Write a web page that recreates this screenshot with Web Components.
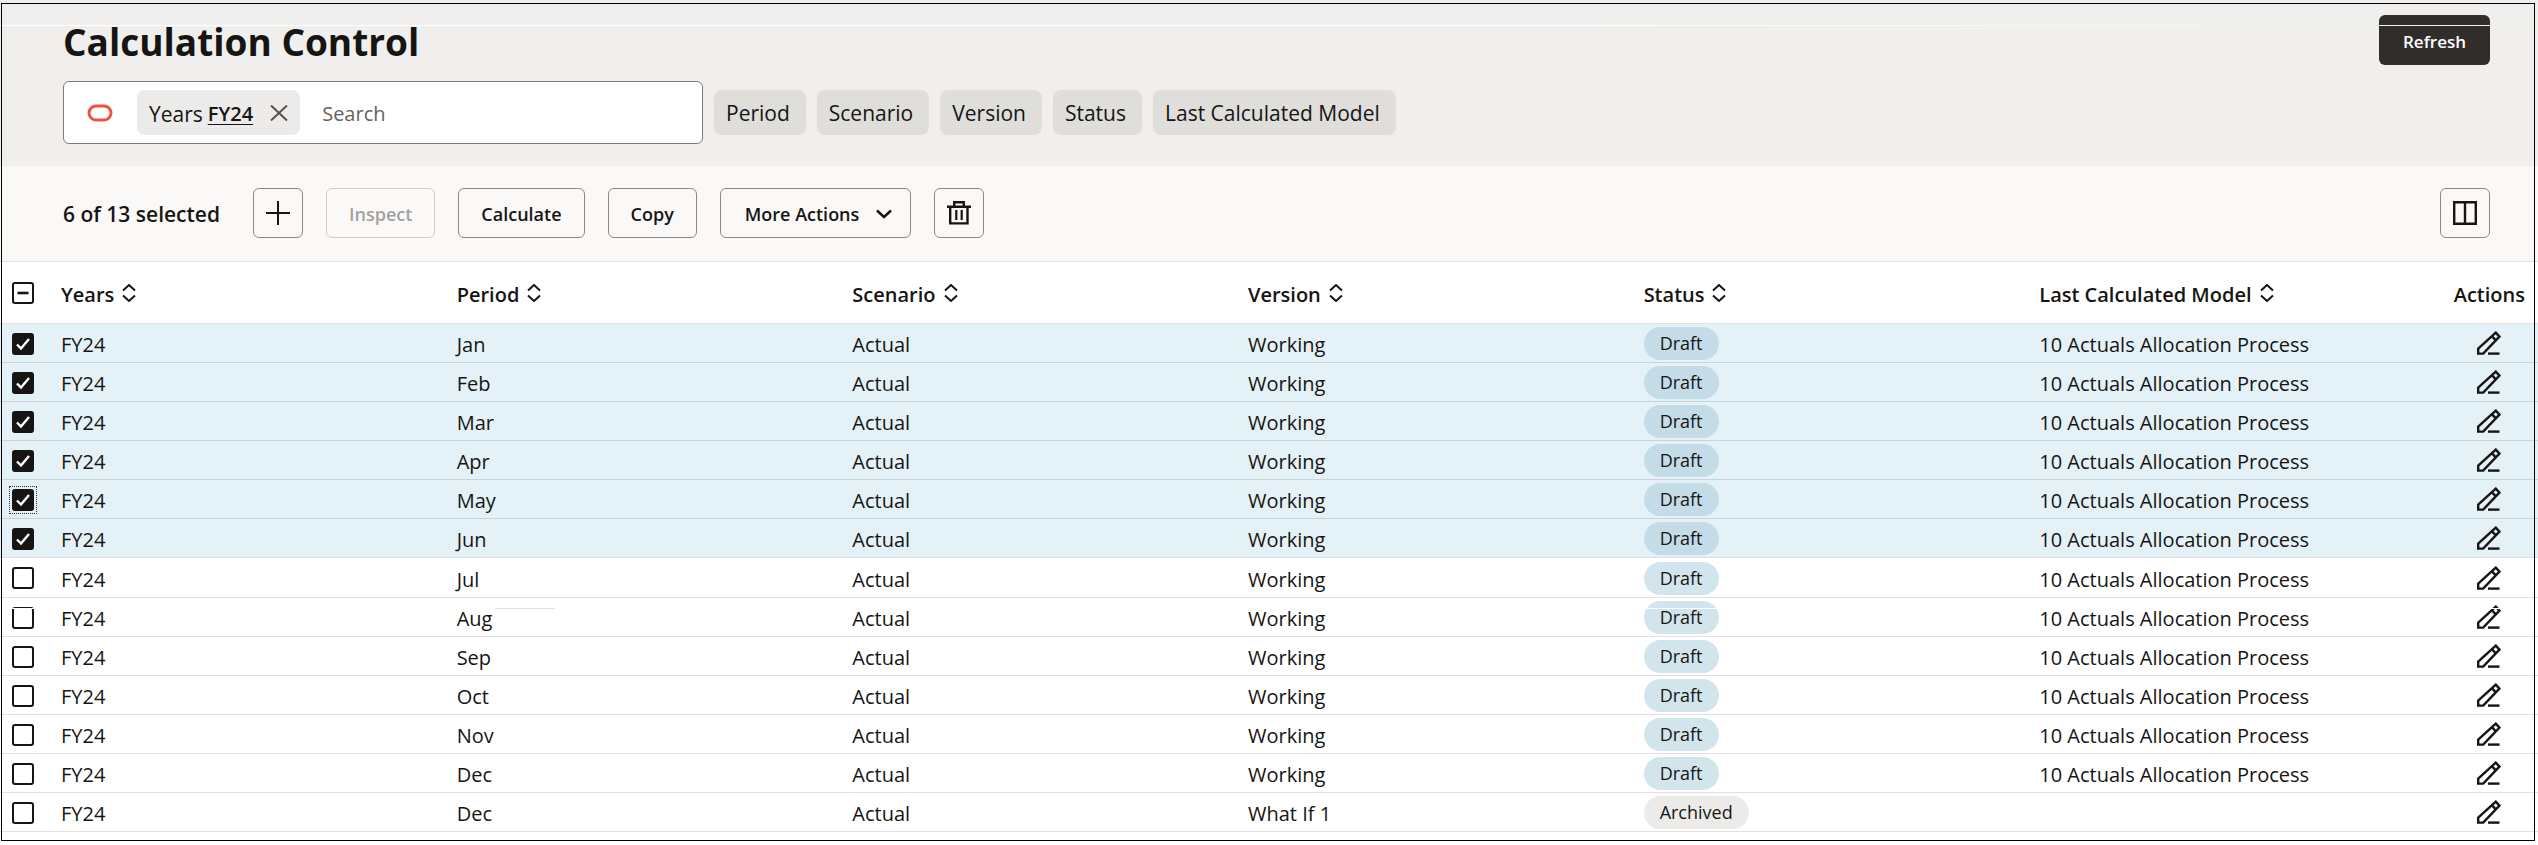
<!DOCTYPE html>
<html lang="en">
<head>
<meta charset="utf-8">
<title>Calculation Control</title>
<style>
  body {
    margin: 0;
    background: #fff;
    color: #161513;
    font-family: "Open Sans", "Noto Sans", sans-serif;
    font-size: 20px;
  }
</style>
</head>
<body>
<calc-page>
  <calc-header heading="Calculation Control">
    <calc-button slot="action" variant="primary">Refresh</calc-button>
    <search-box slot="filters" field="Years" value="FY24"></search-box>
    <filter-chip slot="filters">Period</filter-chip>
    <filter-chip slot="filters">Scenario</filter-chip>
    <filter-chip slot="filters">Version</filter-chip>
    <filter-chip slot="filters">Status</filter-chip>
    <filter-chip slot="filters">Last Calculated Model</filter-chip>
  </calc-header>
  <calc-toolbar>
    <span slot="count">6 of 13 selected</span>
    <calc-button icon="plus" label="Create"></calc-button>
    <calc-button disabled>Inspect</calc-button>
    <calc-button>Calculate</calc-button>
    <calc-button>Copy</calc-button>
    <calc-button icon="chevron">More Actions</calc-button>
    <calc-button icon="trash" label="Delete"></calc-button>
    <calc-button slot="end" icon="columns" label="Manage columns"></calc-button>
  </calc-toolbar>
  <calc-table></calc-table>
</calc-page>

<script>
const icons = {
  plus: `<svg width="24" height="24" viewBox="0 0 24 24"><path d="M12 0v24M0 12h24" stroke-width="2"/></svg>`,
  chevron: `<svg width="16" height="10" viewBox="0 0 16 10"><path d="M1 1.5l7 6.5 7-6.5" stroke-width="2.4"/></svg>`,
  trash: `<svg width="24" height="24" viewBox="0 0 24 24"><path d="M7.2 5.5V1.2h9.6v4.3M0 5.8h24M3.2 5.8v16.6h17.3V5.8" stroke-width="2.4"/><path d="M9.3 9v10M14.7 9v10" stroke-width="2.2"/></svg>`,
  columns: `<svg width="24" height="24" viewBox="0 0 24 24"><path d="M1.2 1.2h21.6v21.6H1.2zM12 1v22" stroke-width="2.4"/></svg>`,
  close: `<svg width="18" height="16" viewBox="0 0 18 16"><path d="M1 .5l16 15M17 .5l-16 15" stroke-width="2"/></svg>`,
  sort: `<svg width="14" height="18" viewBox="0 0 14 18"><path d="M1 6.5l6-5.5 6 5.5M1 11.5l6 5.5 6-5.5" stroke-width="2"/></svg>`,
  pencil: `<svg width="24" height="24" viewBox="0 0 24 24"><path d="M1.2 17.6L18.8 1.6l3.6 4L6.2 22.6h-5zM14.8 5.2l3.8 4" stroke-width="2.4"/><path d="M11 22.6h11.5" stroke-width="2.4"/></svg>`,
  check: `<svg width="22" height="22" viewBox="0 0 22 22"><path d="M5 11.5l4 4 8-9.5" stroke="#fff" stroke-width="2.4"/></svg>`,
  dash: `<svg width="22" height="22" viewBox="0 0 22 22"><path d="M5.5 11h11" stroke-width="2.6"/></svg>`
};

const base = `
  * { box-sizing: border-box; }
  svg { display: block; fill: none; stroke: currentColor; }
  button, input { font: inherit; color: inherit; }
`;

class CalcPage extends HTMLElement {
  constructor() {
    super();
    this.attachShadow({ mode: "open" }).innerHTML = `
      <style>
        ${base}
        :host {
          display: block;
          position: relative;
          padding-bottom: 13px;
        }
        .frame {
          position: absolute;
          inset: 3px 3px 4px 1px;
          border: 1px solid #000;
          pointer-events: none;
        }
      </style>
      <slot></slot>
      <div class="frame"></div>
    `;
  }
}

class CalcHeader extends HTMLElement {
  constructor() {
    super();
    this.attachShadow({ mode: "open" });
  }

  connectedCallback() {
    this.shadowRoot.innerHTML = `
      <style>
        ${base}
        :host {
          display: block;
          position: relative;
          padding: 15px 48px 22px 63px;
          background: #f0efed;
        }
        .top {
          display: flex;
          justify-content: space-between;
          align-items: flex-start;
          min-height: 66px;
        }
        h1 {
          margin: 0;
          font-size: 37px;
          font-weight: 700;
          line-height: 54px;
        }
        .filters {
          display: flex;
          align-items: center;
          gap: 11px;
        }
        .line {
          position: absolute;
          top: 25px;
          left: 0;
          right: 0;
          height: 1px;
          background: linear-gradient(90deg, #fff 60%, #e9f8e9 90%);
        }
      </style>
      <div class="top">
        <h1>${this.getAttribute("heading")}</h1>
        <slot name="action"></slot>
      </div>
      <div class="filters"><slot name="filters"></slot></div>
      <div class="line"></div>
    `;
  }
}

class SearchBox extends HTMLElement {
  constructor() {
    super();
    this.attachShadow({ mode: "open" });
  }

  connectedCallback() {
    this.shadowRoot.innerHTML = `
      <style>
        ${base}
        :host {
          box-sizing: border-box;
          display: flex;
          align-items: center;
          flex: 0 1 640px;
          height: 63px;
          padding: 0 16px 0 23px;
          border: 1px solid #7d7c7a;
          border-radius: 6px;
          background: #fff;
          font-size: 21px;
        }
        .logo { color: #ee5340; }
        .token {
          display: flex;
          align-items: center;
          height: 45px;
          margin: 0 22px 0 24px;
          padding: 0 12px;
          border-radius: 8px;
          background: #ecebea;
          white-space: nowrap;
        }
        b {
          margin-left: 5px;
          font-size: 20px;
          font-weight: 600;
          text-decoration: underline;
          text-decoration-thickness: 1px;
          text-underline-offset: 3px;
        }
        button {
          margin-left: 17px;
          padding: 0;
          border: 0;
          background: none;
          color: #55524e;
        }
        input {
          flex: 1;
          min-width: 0;
          padding: 2px 0 0;
          border: 0;
          outline: 0;
          background: none;
          font-size: 20px;
        }
        input::placeholder { color: #65625e; opacity: 1; }
        .token span, b { padding-top: 2px; }
      </style>
      <svg class="logo" width="26" height="18" viewBox="0 0 26 18"><rect x="2" y="2" width="22" height="14" rx="7" stroke-width="3"/></svg>
      <span class="token">
        <span>${this.getAttribute("field")}</span><b>${this.getAttribute("value")}</b>
        <button type="button" aria-label="Remove filter">${icons.close}</button>
      </span>
      <input type="text" placeholder="Search" aria-label="Search">
    `;
  }
}

class FilterChip extends HTMLElement {
  constructor() {
    super();
    this.attachShadow({ mode: "open" }).innerHTML = `
      <style>
        ${base}
        :host { display: block; }
        button {
          display: block;
          height: 45px;
          padding: 0 16px 0 12px;
          border: 0;
          border-radius: 8px;
          background: #dfdedb;
          font-size: 21px;
          white-space: nowrap;
        }
      </style>
      <button type="button"><slot></slot></button>
    `;
  }
}

class CalcToolbar extends HTMLElement {
  constructor() {
    super();
    this.attachShadow({ mode: "open" }).innerHTML = `
      <style>
        ${base}
        :host {
          display: flex;
          align-items: center;
          gap: 23px;
          padding: 22px 48px 23px 63px;
          border-bottom: 1px solid #e3e2e0;
          background: #fbf9f8;
        }
        .count {
          margin-right: 10px;
          padding-top: 2px;
          font-size: 21px;
          font-weight: 600;
          white-space: nowrap;
        }
        .end { margin-left: auto; }
      </style>
      <div class="count"><slot name="count"></slot></div>
      <slot></slot>
      <div class="end"><slot name="end"></slot></div>
    `;
  }
}

class CalcButton extends HTMLElement {
  constructor() {
    super();
    this.attachShadow({ mode: "open" });
  }

  connectedCallback() {
    const icon = this.getAttribute("icon");
    const label = this.getAttribute("label");
    const disabled = this.hasAttribute("disabled");
    this.shadowRoot.innerHTML = `
      <style>
        ${base}
        :host { display: block; }
        button {
          display: flex;
          align-items: center;
          justify-content: center;
          gap: 17px;
          min-width: 50px;
          height: 50px;
          padding: 2px 22px 0;
          border: 1px solid #8b8986;
          border-radius: 6px;
          background: none;
          font-size: 18px;
          font-weight: 600;
          white-space: nowrap;
        }
        button.icon-only { padding: 0; }
        button.menu { padding: 2px 18px 0 24px; }
        button:disabled {
          border-color: #cfcdca;
          color: #a3a19e;
        }
        :host([variant="primary"]) button {
          border: 0;
          padding: 2px 24px 0;
          background: #312d2a;
          color: #fff;
          font-size: 17px;
        }
      </style>
      <button type="button" class="${label ? "icon-only" : icon ? "menu" : ""}"
        ${label ? `aria-label="${label}"` : ""} ${disabled ? "disabled" : ""}>
        <slot></slot>${icon ? icons[icon] : ""}
      </button>
    `;
  }
}

class StatusBadge extends HTMLElement {
  constructor() {
    super();
    this.attachShadow({ mode: "open" }).innerHTML = `
      <style>
        :host {
          display: inline-flex;
          align-items: center;
          height: 33px;
          padding: 0 16px;
          border-radius: 17px;
          background: #d2e5ec;
          font-size: 18px;
          vertical-align: top;
        }
        :host([selected]) { background: #c3dce8; }
        :host([archived]) { background: #ecebea; }
      </style>
      <slot></slot>
    `;
  }
}

class CalcTable extends HTMLElement {
  constructor() {
    super();
    this.attachShadow({ mode: "open" });
    this.months = ["Jan", "Feb", "Mar", "Apr", "May", "Jun", "Jul", "Aug", "Sep", "Oct", "Nov", "Dec"];
  }

  connectedCallback() {
    this.rows = this.months.map((month, i) => ({
      period: month,
      version: "Working",
      status: "Draft",
      model: "10 Actuals Allocation Process",
      selected: i < 6,
      focused: month === "May",
      lined: month === "Aug"
    }));
    this.rows.push({ period: "Dec", version: "What If 1", status: "Archived", model: "" });
    this.render();
  }

  renderRow(row, i) {
    const classes = [row.selected && "selected", row.lined && "lined"].filter(Boolean).join(" ");
    return `
      <tr class="${classes}">
        <td class="pick">
          <label class="tick ${row.focused ? "focused" : ""}">
            <input type="checkbox" aria-label="Select row ${i + 1}" ${row.selected ? "checked" : ""}>
            ${row.selected ? icons.check : ""}
          </label>
        </td>
        <td>FY24</td>
        <td>${row.period}</td>
        <td>Actual</td>
        <td>${row.version}</td>
        <td class="status"><status-badge ${row.selected ? "selected" : ""} ${row.status === "Archived" ? "archived" : ""}>${row.status}</status-badge></td>
        <td>${row.model}</td>
        <td class="actions"><button type="button" aria-label="Edit">${icons.pencil}</button></td>
      </tr>`;
  }

  render() {
    const columns = ["Years", "Period", "Scenario", "Version", "Status", "Last Calculated Model"];
    this.shadowRoot.innerHTML = `
      <style>
        ${base}
        :host { display: block; }
        table {
          width: 100%;
          table-layout: fixed;
          border-collapse: separate;
          border-spacing: 0;
          font-size: 20px;
        }
        .pick-col { width: 46px; }
        .actions-col { width: 118px; }
        th, td {
          padding: 3px 0 0 15px;
          border-bottom: 1px solid #e0e0e0;
          text-align: left;
          line-height: 27px;
          white-space: nowrap;
        }
        th {
          height: 62px;
          font-weight: 600;
        }
        td { height: 39px; }
        .selected td {
          border-color: #c7d5db;
          background: #e4f1f6;
        }
        .selected:has(+ tr:not(.selected)) td { border-color: #dbe1e4; }
        .selected + tr:not(.selected) td { height: 40px; }
        th button {
          display: flex;
          align-items: center;
          gap: 8px;
          padding: 0;
          border: 0;
          background: none;
          font-weight: 600;
        }
        th svg { margin-bottom: 2px; }
        .tick svg { margin: 0; }
        th.pick, td.pick { padding: 1px 0 0 12px; }
        td.status { padding-top: 1px; }
        th.last {
          padding: 3px 13px 0 0;
          text-align: right;
        }
        td.actions { padding: 0 0 0 57px; }
        .actions button {
          display: block;
          padding: 0;
          border: 0;
          background: none;
        }
        .tick {
          display: grid;
          width: 22px;
          height: 22px;
        }
        .tick > * {
          grid-area: 1 / 1;
          pointer-events: none;
        }
        .tick input {
          appearance: none;
          width: 22px;
          height: 22px;
          margin: 0;
          border: 2px solid #161513;
          border-radius: 3px;
          background: #fff;
        }
        .tick input:checked { background: #161513; }
        .focused {
          outline: 1px dotted #333;
          outline-offset: 2px;
        }
        .lined { position: relative; }
        .lined td:first-child::after {
          content: "";
          position: absolute;
          top: 10px;
          left: 0;
          right: 0;
          height: 1px;
          background: linear-gradient(90deg, #fff 495px, #d2e5ec 495px, #d2e5ec 555px, #fff 555px);
          pointer-events: none;
        }
      </style>
      <table>
        <colgroup>
          <col class="pick-col">
          ${columns.map(() => "<col>").join("")}
          <col class="actions-col">
        </colgroup>
        <thead>
          <tr>
            <th class="pick"><label class="tick"><input type="checkbox" id="all" aria-label="Select all">${icons.dash}</label></th>
            ${columns.map((c) => `<th><button type="button">${c}${icons.sort}</button></th>`).join("")}
            <th class="last">Actions</th>
          </tr>
        </thead>
        <tbody>${this.rows.map((row, i) => this.renderRow(row, i)).join("")}</tbody>
      </table>
    `;
    this.shadowRoot.getElementById("all").indeterminate = true;
  }
}

customElements.define("calc-page", CalcPage);
customElements.define("calc-header", CalcHeader);
customElements.define("search-box", SearchBox);
customElements.define("filter-chip", FilterChip);
customElements.define("calc-toolbar", CalcToolbar);
customElements.define("calc-button", CalcButton);
customElements.define("status-badge", StatusBadge);
customElements.define("calc-table", CalcTable);
</script>
</body>
</html>
